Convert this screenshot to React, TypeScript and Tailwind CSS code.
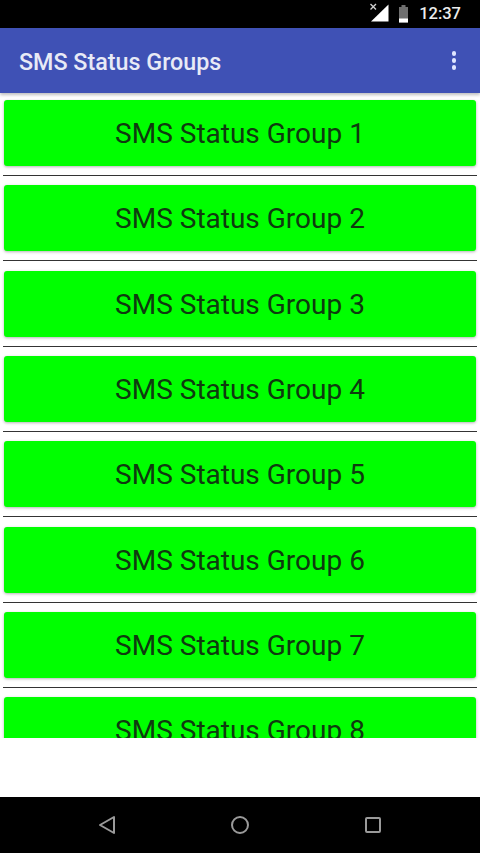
const groups = [1, 2, 3, 4, 5, 6, 7, 8];

const StatusBar = () => (
  <div className="flex h-[28px] items-center justify-end bg-black pr-[19px]">
    <svg width="20" height="20" viewBox="0 0 20 20" className="mr-[9px] mb-[2px]">
      <path d="M2 18.5 L19.5 1.5 V18.5 Z" fill="#fff" />
      <path d="M1.5 1 L7 6.5 M7 1 L1.5 6.5" stroke="#d0d0d0" strokeWidth="1.4" />
    </svg>
    <svg width="11" height="18" viewBox="0 0 11 18" className="mr-[10px]">
      <path d="M3.5 0 H7.5 V2 H10 V17.5 H1 V2 H3.5 Z" fill="#6f6f6f" />
      <path d="M1 13.5 H10 V17.5 H1 Z" fill="#fff" />
    </svg>
    <span className="font-['Roboto',sans-serif] text-[16.5px] font-medium leading-none text-[#ececec]">
      12:37
    </span>
  </div>
);

const AppBar = () => (
  <header className="z-10 flex h-[65px] items-center justify-between bg-[#3f51b5] pl-[19px] pr-[24px] shadow-[0_2px_3px_rgba(0,0,0,0.25)]">
    <h1 className="pt-[3px] font-['Roboto',sans-serif] text-[23.3px] font-medium text-[#e8eaf6]">
      SMS Status Groups
    </h1>
    <div className="flex flex-col gap-[2.5px]">
      <span className="size-[4.5px] rounded-full bg-[#dfe6ff]" />
      <span className="size-[4.5px] rounded-full bg-[#dfe6ff]" />
      <span className="size-[4.5px] rounded-full bg-[#dfe6ff]" />
    </div>
  </header>
);

const GroupRow = ({ n }: { n: number }) => (
  <div className="h-[85.33px] shrink-0">
    <button className="mx-[4px] flex h-[66px] w-[472px] items-center justify-center rounded-[3px] bg-[#00ff00] pt-[2px] font-['Roboto',sans-serif] text-[28px] text-[#0f3a0f] shadow-[0_1px_3px_rgba(0,0,0,0.3)]">
      SMS Status Group {n}
    </button>
    <div className="mx-[3px] mt-[9px] h-px bg-[#333]" />
  </div>
);

const NavBar = () => (
  <nav className="flex h-[56px] items-center justify-between bg-black pl-[98px] pr-[98px]">
    <svg width="18" height="20" viewBox="0 0 18 20" fill="none" stroke="#9a9a9a" strokeWidth="2">
      <path d="M16 2 V18 L2 10 Z" strokeLinejoin="round" />
    </svg>
    <svg width="20" height="20" viewBox="0 0 20 20" fill="none" stroke="#9a9a9a" strokeWidth="2">
      <circle cx="10" cy="10" r="8" />
    </svg>
    <svg width="18" height="18" viewBox="0 0 18 18" fill="none" stroke="#9a9a9a" strokeWidth="2">
      <rect x="2" y="2" width="14" height="14" rx="1" />
    </svg>
  </nav>
);

export default function App() {
  return (
    <div className="flex h-[853px] w-[480px] flex-col overflow-hidden bg-white">
      <StatusBar />
      <AppBar />
      <main className="flex-1">
        <div className="flex h-[645px] flex-col overflow-hidden pt-[7px]">
          {groups.map((n) => (
            <GroupRow key={n} n={n} />
          ))}
        </div>
      </main>
      <NavBar />
    </div>
  );
}
